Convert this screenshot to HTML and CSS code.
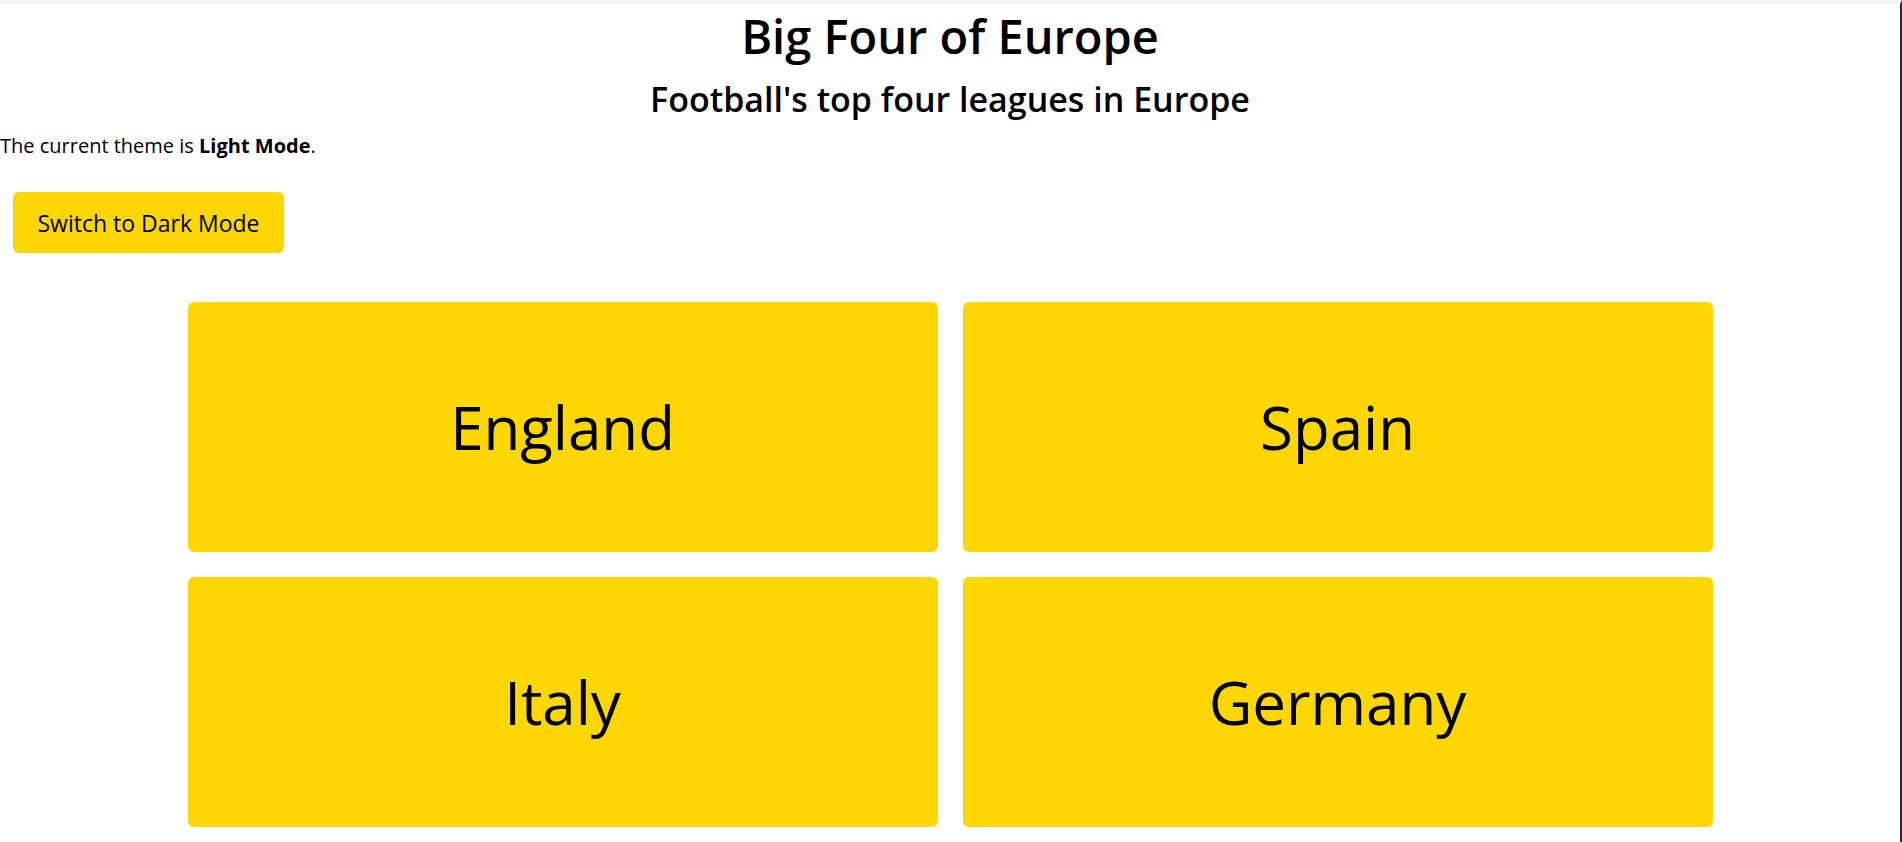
FILE: index.html
```html
<!DOCTYPE html>
<html lang="en">
<head>
<meta charset="UTF-8">
<meta name="viewport" content="width=device-width, initial-scale=1.0">
<title>Big Four of Europe</title>
<link rel="stylesheet" href="styles.css">
</head>
<body>
<div class="page" id="page">
    <header class="header">
        <h1>Big Four of Europe</h1>
        <h2>Football's top four leagues in Europe</h2>
    </header>
    <p class="theme-text">The current theme is <b id="theme-name">Light Mode</b>.</p>
    <button class="theme-button" id="theme-button" onclick="toggleTheme()">Switch to Dark Mode</button>
    <div class="leagues">
        <div class="league">England</div>
        <div class="league">Spain</div>
        <div class="league">Italy</div>
        <div class="league">Germany</div>
    </div>
</div>

<script>
let darkMode = false;

function toggleTheme() {
    darkMode = !darkMode;
    document.getElementById('page').classList.toggle('dark', darkMode);
    document.getElementById('theme-name').innerText = darkMode ? 'Dark Mode' : 'Light Mode';
    document.getElementById('theme-button').innerText = darkMode ? 'Switch to Light Mode' : 'Switch to Dark Mode';
}
</script>
</body>
</html>
```

FILE: styles.css
```css
body {
    margin: 0;
    font-family: "Open Sans", "Noto Sans", sans-serif;
    color: #000;
    background-color: #fff;
}

.page {
    min-height: 100vh;
    box-sizing: border-box;
    border-top: 4px solid #f3f3f3;
    border-right: 2px solid #2b2b2b;
}

.header {
    text-align: center;
}

.header h1 {
    margin: 0;
    font-size: 47px;
    font-weight: 600;
}

.header h2 {
    margin: 8px 0 0;
    font-size: 34px;
    font-weight: 600;
}

.theme-text {
    margin: 10px 0 0;
    font-size: 20px;
}

.theme-button {
    display: block;
    margin: 33px 0 0 13px;
    width: 271px;
    height: 61px;
    font-family: inherit;
    font-size: 23px;
    color: #000;
    border: none;
    border-radius: 6px;
    cursor: pointer;
    background-color: #ffd700;
}

.leagues {
    display: grid;
    grid-template-columns: repeat(2, 750px);
    grid-auto-rows: 250px;
    gap: 25px;
    justify-content: center;
    margin-top: 49px;
}

.league {
    display: flex;
    align-items: center;
    justify-content: center;
    font-size: 60px;
    border-radius: 6px;
    background-color: #ffd700;
}

.dark {
    color: #fff;
    background-color: #121212;
}
```
